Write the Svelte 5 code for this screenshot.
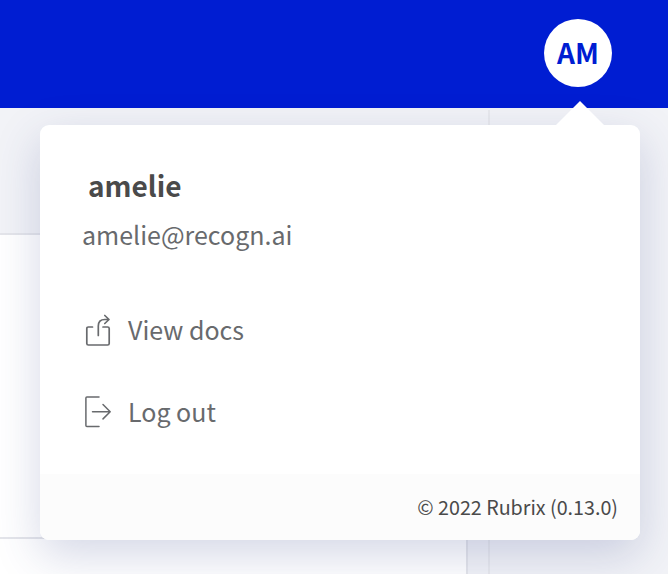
<script>
  const user = { initials: 'AM', name: 'amelie', email: 'amelie@recogn.ai' };
</script>

<div class="app">
  <header class="topbar">
    <button class="avatar">{user.initials}</button>
  </header>
  <div class="body">
    <main>
      <div class="filters"></div>
      <div class="record"></div>
      <div class="record next"></div>
    </main>
    <aside></aside>
  </div>

  <div class="menu">
    <span class="pointer"></span>
    <div class="content">
      <p class="name">{user.name}</p>
      <p class="email">{user.email}</p>
      <a class="item docs" href="#docs">
        <svg width="30" height="36" viewBox="0 0 30 36">
          <path d="M10.5 13H6.4Q4.8 13 4.8 14.6V29.4Q4.8 31 6.4 31H25.6Q27.2 31 27.2 29.4V14.6Q27.2 13 25.6 13H21M16.3 21.5V12Q16.3 5.5 22.8 5.5H26.8M22.8 1.5L27 5.5L22.8 9.5" />
        </svg>
        <span>View docs</span>
      </a>
      <a class="item logout" href="#logout">
        <svg width="30" height="36" viewBox="0 0 30 36">
          <path d="M17 0.9H4.9Q3.9 0.9 3.9 1.9V29.5Q3.9 30.5 4.9 30.5H17M10.5 15.7H28M21 8.5L28.2 15.7L21 22.9" />
        </svg>
        <span>Log out</span>
      </a>
    </div>
    <footer>© 2022 Rubrix (0.13.0)</footer>
  </div>
</div>

<style>
  .app {
    position: relative;
    width: 668px;
    height: 574px;
    overflow: hidden;
    display: flex;
    flex-direction: column;
    background: #f2f3f7;
    font-family: "Noto Sans CJK SC", "Noto Sans", sans-serif;
  }
  .topbar {
    box-sizing: border-box;
    height: 108px;
    padding: 19px 56px 0 0;
    display: flex;
    justify-content: flex-end;
    background: #001dd2;
  }
  .avatar {
    width: 68px;
    height: 68px;
    padding: 0 0 2px;
    border: 0;
    border-radius: 50%;
    background: #fff;
    color: #001dd2;
    font: bold 28px/66px "Noto Sans CJK SC", sans-serif;
  }
  .body {
    flex: 1;
    display: flex;
  }
  main {
    width: 488px;
    display: flex;
    flex-direction: column;
  }
  .filters {
    height: 125px;
  }
  .record {
    box-sizing: border-box;
    width: 468px;
    height: 304px;
    border: solid #e4e5ea;
    border-width: 2px 2px 0 0;
    background: #fff;
  }
  .next {
    flex: 1;
  }
  aside {
    flex: 1;
    margin-top: 2px;
    border-left: 2px solid #e8e9ed;
  }
  .menu {
    position: absolute;
    left: 40px;
    top: 125px;
    width: 600px;
    height: 415px;
    display: flex;
    flex-direction: column;
    border-radius: 9px;
    background: #fff;
    box-shadow: 0 15px 46px rgba(50, 65, 135, 0.21);
  }
  .pointer {
    position: absolute;
    left: 515px;
    top: -24px;
    width: 50px;
    height: 25px;
    background: #fff;
    clip-path: polygon(50% 0, 100% 100%, 0 100%);
  }
  .content {
    flex: 1;
    padding: 40px 42px 0;
  }
  p {
    margin: 0;
    white-space: nowrap;
  }
  .name {
    padding-left: 6px;
    font-size: 28px;
    font-weight: 600;
    line-height: 40px;
    color: #4a4a4a;
  }
  .email {
    margin-top: 9px;
    font-size: 25px;
    line-height: 40px;
    color: #686a6d;
  }
  .item {
    height: 36px;
    display: flex;
    gap: 16px;
    color: #686a6d;
    font-size: 25px;
    line-height: 30px;
    text-decoration: none;
    white-space: nowrap;
  }
  .docs {
    margin-top: 60px;
  }
  .logout {
    margin-top: 46px;
  }
  svg {
    fill: none;
    stroke: #686a6d;
    stroke-width: 1.7;
    stroke-linecap: round;
    stroke-linejoin: round;
  }
  .logout svg {
    stroke-width: 1.5;
  }
  footer {
    height: 66px;
    padding-right: 22px;
    border-radius: 0 0 9px 9px;
    background: #fcfcfc;
    color: #4a4a4a;
    font-size: 19.7px;
    line-height: 66px;
    text-align: right;
    white-space: nowrap;
  }
</style>
